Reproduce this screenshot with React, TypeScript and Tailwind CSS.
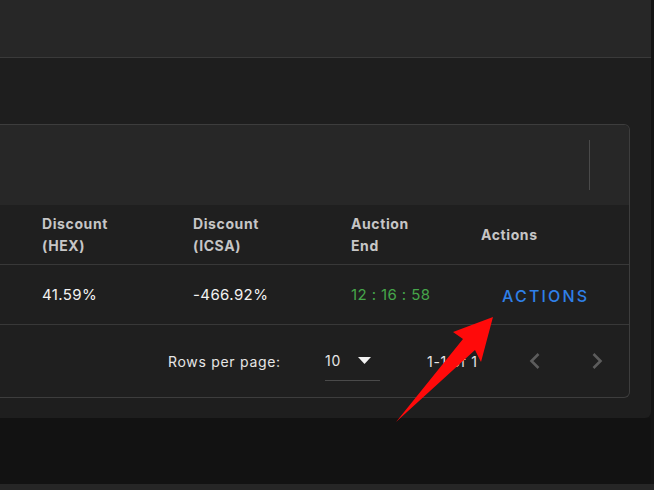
import { ReactNode } from "react";

const HeadCell = ({ children }: { children?: ReactNode }) => (
  <div className="flex items-center px-4 text-[14px] font-bold leading-[22px] tracking-[0.6px] text-[#c6c6c6]">
    {children}
  </div>
);

const BodyCell = ({
  children,
  className = "",
}: {
  children?: ReactNode;
  className?: string;
}) => (
  <div className={`flex items-center px-4 pt-[2px] text-[15px] tracking-[0.4px] ${className}`}>
    {children}
  </div>
);

const Chevron = ({ dir }: { dir: "left" | "right" }) => (
  <svg width="24" height="24" viewBox="0 0 24 24" fill="none">
    <polyline
      points={dir === "left" ? "15.5,5 8.5,12 15.5,19" : "8.5,5 15.5,12 8.5,19"}
      stroke="#5c5c5c"
      strokeWidth="2.6"
      strokeLinejoin="miter"
    />
  </svg>
);

const App = () => {
  return (
    <div
      className="relative flex h-[490px] w-[654px] flex-col overflow-hidden bg-[#141414]"
      style={{ fontFamily: "Inter, 'Noto Sans', sans-serif" }}
    >
      <div className="flex w-[651px] flex-col">
        {/* top bar */}
        <div className="h-[58px] border-b border-[#3a3a3a] bg-[#272727]" />

        {/* main panel */}
        <div className="h-[360px] rounded-br-md bg-[#1e1e1e] pt-[66px]">
          <div className="w-[630px] overflow-hidden rounded-r-md border border-l-0 border-[#3d3d3d] bg-[#1f1f1f]">
            {/* toolbar */}
            <div className="flex h-[80px] items-center justify-end bg-[#272727] pr-[39px]">
              <div className="h-[50px] w-px bg-[#4a4a4a]" />
            </div>

            {/* header row */}
            <div className="grid h-[60px] grid-cols-[26px_151px_158px_130px_1fr] border-b border-[#383838]">
              <div />
              <HeadCell>
                Discount
                <br />
                (HEX)
              </HeadCell>
              <HeadCell>
                Discount
                <br />
                (ICSA)
              </HeadCell>
              <HeadCell>
                Auction
                <br />
                End
              </HeadCell>
              <HeadCell>Actions</HeadCell>
            </div>

            {/* data row */}
            <div className="grid h-[60px] grid-cols-[26px_151px_158px_130px_1fr] border-b border-[#383838]">
              <div />
              <BodyCell className="text-[#f2f2f2]">41.59%</BodyCell>
              <BodyCell className="text-[#f2f2f2]">-466.92%</BodyCell>
              <BodyCell className="text-[#46a64a]">12 : 16 : 58</BodyCell>
              <BodyCell>
                <span className="ml-[21px] text-[16px] font-medium tracking-[2.2px] text-[#2f80e8]">
                  ACTIONS
                </span>
              </BodyCell>
            </div>

            {/* pagination */}
            <div className="flex h-[72px] items-center pl-[168px] text-[14px] tracking-[0.7px] text-[#e6e6e6]">
              <div className="w-[157px]">Rows per page:</div>
              <div className="flex h-[40px] w-[55px] items-center border-b border-[#4a4a4a]">
                <span className="w-[33px]">10</span>
                <svg width="13" height="7" viewBox="0 0 13 7">
                  <polygon points="0,0 13,0 6.5,7" fill="#f2f2f2" />
                </svg>
              </div>
              <div className="ml-[47px] w-[96px]">1-1 of 1</div>
              <Chevron dir="left" />
              <div className="ml-[38px]">
                <Chevron dir="right" />
              </div>
            </div>
          </div>
        </div>

        {/* below */}
        <div className="h-[66px] bg-[#121212]" />
      </div>
      <div className="h-[6px] w-full bg-[#262626]" />

      {/* annotation arrow */}
      <svg
        className="pointer-events-none absolute left-0 top-0"
        width="654"
        height="490"
        viewBox="0 0 654 490"
      >
        <polygon
          points="396,422 463,339 453,332 493,317 481,362 475,350"
          fill="#ff0a0a"
        />
      </svg>
    </div>
  );
};

export default App;
